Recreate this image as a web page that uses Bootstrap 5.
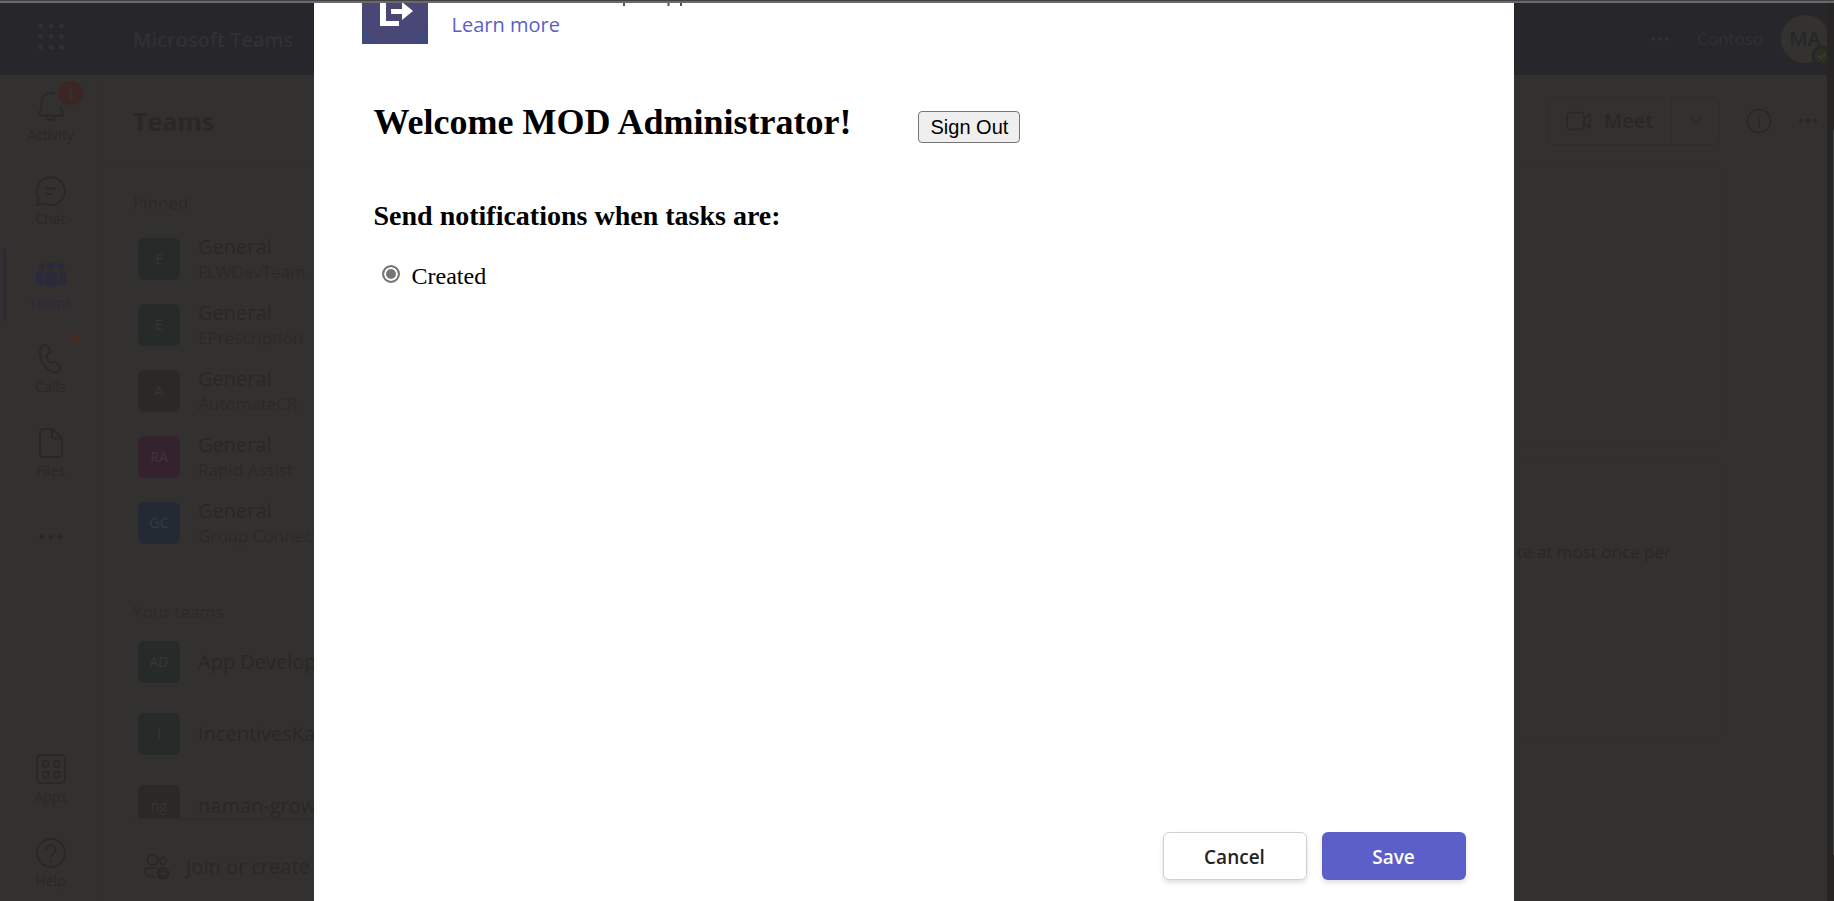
<!DOCTYPE html>
<html lang="en">
<head>
<meta charset="utf-8">
<meta name="viewport" content="width=device-width, initial-scale=1">
<title>Microsoft Teams</title>
<link href="https://cdn.jsdelivr.net/npm/bootstrap@5.3.0/dist/css/bootstrap.min.css" rel="stylesheet">
<style>
  :root { --page: #33312f; --ink: #292826; --line: #302e2d; --bar: #27262b; --violet: #2b293a; }
  body { font-family: "Open Sans", "Noto Sans", sans-serif; font-size: 20px; line-height: 28px; color: var(--ink); background: var(--page); }
  a { color: inherit; text-decoration: none; }
  button { color: inherit; }
  svg { display: block; fill: none; stroke: currentColor; flex: none; }
  svg.solid { fill: currentColor; stroke: none; }
  .app-shell { padding-right: 7px; }
  .window-edge { height: 3px; border-top: 1px solid #414042; background: #6b696b; margin-right: -7px; position: relative; z-index: 1; }
  .top-bar { height: 72px; background: var(--bar); color: #32312f; }
  .rail-cell { width: 102px; }
  .brand { font-size: 20px; font-weight: 600; padding: 2px 31px 0; }
  .tenant { font-size: 17px; padding: 0 18px 0 27px; }
  .rail { border-right: 1px solid var(--line); padding: 6px 0 2px; gap: 12px; font-size: 14px; }
  .rail a { height: 72px; padding-top: 11px; line-height: 26px; position: relative; }
  .rail a.active { color: var(--violet); }
  .rail a.active::before { content: ""; position: absolute; left: 3px; top: 0; width: 3px; height: 72px; background: var(--violet); }
  .rail .rail-more { padding-top: 0; }
  .count { position: absolute; top: 0; left: 58px; width: 25px; height: 24px; border-radius: 12px; background: #3b2624; color: #33312f; font-weight: 700; text-align: center; }
  .dot { position: absolute; top: 0; left: 69px; width: 11px; height: 11px; border-radius: 50%; background: #432c27; }
  .teams-panel { width: 300px; flex: none; border-right: 1px solid var(--line); }
  .teams-panel h1 { font-size: 25px; font-weight: 700; line-height: 36px; height: 92px; padding: 28px 31px 0; margin: 0; border-bottom: 1px solid var(--line); }
  .teams-panel h2 { font-size: 17px; font-weight: 400; line-height: 28px; margin: 0; padding-left: 31px; color: #2b2a28; }
  .head-pinned { padding-top: 24px; height: 61px; }
  .head-teams { padding-top: 42px; height: 70px; }
  .team-row { height: 66px; padding-left: 36px; gap: 18px; line-height: 25px; white-space: nowrap; }
  .team-row.single { height: 72px; }
  .team-row small { font-size: 17px; display: block; color: #2b2a28; }
  .tile { width: 42px; height: 42px; border-radius: 6px; background: #262b29; color: #343836; font-size: 14px; flex: none; }
  .tile.gray { background: #2b2927; color: #353432; }
  .tile.pink { background: #34222e; color: #46333f; }
  .tile.blue { background: #242a33; color: #343b40; }
  .join { height: 83px; border-top: 2px solid #302e2d; margin-left: 31px; padding: 12px 0 0 10px; gap: 16px; white-space: nowrap; }
  .meet-group { height: 48px; border: 1px solid #2f2d2c; border-radius: 6px; }
  .meet-group button { background: none; border: 0; }
  .meet-group button + button { border-left: 1px solid #2f2d2c; width: 48px; }
  .meet-btn { width: 123px; font-weight: 600; gap: 12px; }
  .channel-tools { height: 91px; gap: 26px; padding-right: 9px; }
  .post-box { border: 1px solid #312f2d; border-radius: 6px; margin: 0 105px 20px 0; font-size: 17px; text-align: right; }
  .avatar { width: 48px; height: 48px; border-radius: 50%; background: #33322f; color: #272629; font-weight: 600; margin-right: -2px; position: relative; }
  .presence { position: absolute; left: 30px; top: 30px; }
  .scroll-strip { position: fixed; right: 0; top: 3px; bottom: 0; width: 7px; background: #262524; overflow: hidden; }
  .thumb { position: absolute; left: 6px; top: 14%; bottom: 5%; width: 6px; background: #454545; border-radius: 3px 0 0 3px; }
  .overlay { position: fixed; top: 3px; bottom: 0; left: 0; right: 7px; }
  .dialog-box { width: 1200px; max-width: 100%; background: #fff; color: #252423; padding: 0 48px 21px; }
  .app-logo { width: 66px; height: 41px; }
  .learn { color: #5b5fc7; padding-left: 24px; }
  .learn svg { margin-left: 170px; color: #4b5566; }
  .tab-form { font-family: "Liberation Serif", serif; font-size: 24px; color: #000; padding: 48px 12px 0; }
  .tab-form h2 { font-size: 36px; font-weight: 700; line-height: 44px; margin: 0; }
  .tab-form h3 { font-size: 28px; font-weight: 700; line-height: 32px; margin: 0 0 30px; padding: 56px 0 0; }
  .sign-out { font-family: "Liberation Sans", sans-serif; font-size: 20px; line-height: 28px; width: 102px; height: 32px; padding: 0; color: #000; background: #efefef; border: 1px solid #767676; border-radius: 4px; margin: 11px 0 0 67px; }
  .radio-row input { appearance: none; width: 18px; height: 18px; border: 2px solid #767676; border-radius: 50%; background: #767676; box-shadow: inset 0 0 0 2px #fff; margin: 0 12px 5px 8px; }
  .dialog-btn { width: 144px; height: 48px; border-radius: 6px; font-size: 19px; font-weight: 600; padding: 2px 0 0; box-shadow: 0 3px 5px rgba(0,0,0,.12); }
  .dialog-actions { gap: 15px; }
  .cancel { background: #fff; border: 1px solid #d1d1d1; color: #252423; }
  .save { background: #5b5fc7; border: 0; color: #fff; }
</style>
</head>
<body>
<div class="app-shell vh-100 d-flex flex-column overflow-hidden">
  <div class="window-edge flex-shrink-0"></div>
  <header class="top-bar d-flex align-items-center flex-shrink-0">
    <div class="rail-cell d-flex justify-content-center pb-1">
      <svg class="solid" width="28" height="28" viewBox="0 0 28 28"><circle cx="3.500" cy="3" r="2.500"/><circle cx="14" cy="3" r="2.500"/><circle cx="24.500" cy="3" r="2.500"/><circle cx="3.500" cy="13.500" r="2.500"/><circle cx="14" cy="13.500" r="2.500"/><circle cx="24.500" cy="13.500" r="2.500"/><circle cx="3.500" cy="24" r="2.500"/><circle cx="14" cy="24" r="2.500"/><circle cx="24.500" cy="24" r="2.500"/></svg>
    </div>
    <div class="brand">Microsoft Teams</div>
    <div class="ms-auto d-flex align-items-center">
      <svg class="solid" width="20" height="6" viewBox="0 0 20 6"><circle cx="3" cy="3" r="2"/><circle cx="10" cy="3" r="2"/><circle cx="17" cy="3" r="2"/></svg>
      <span class="tenant">Contoso</span>
      <div class="avatar d-flex align-items-center justify-content-center">MA
        <svg class="presence" width="22" height="22" viewBox="0 0 22 22"><circle cx="11" cy="11" r="9" fill="#2c3020" stroke="#27262b" stroke-width="3"/><path d="M7.500 11l2.500 2.500 4.500-5" stroke="#3a3d30" stroke-width="1.500"/></svg>
      </div>
    </div>
  </header>
  <div class="d-flex flex-grow-1 overflow-hidden">
    <nav class="rail rail-cell d-flex flex-column flex-shrink-0 text-center">
      <a href="#" class="d-flex flex-column align-items-center">
        <svg width="30" height="30" viewBox="0 0 30 30" stroke-width="1.800"><path d="M19 2Q17 1 15 1C9.500 1 5.500 5 5.500 10v6L3 21.500Q2.500 23.500 4 23.500h22Q27.800 23.500 27 21.500l-2-5.500v-2M11 24a4 4 0 0 0 8 0"/></svg>
        Activity<span class="count">1</span></a>
      <a href="#" class="d-flex flex-column align-items-center">
        <svg width="30" height="30" viewBox="0 0 30 30" stroke-width="1.800"><path d="M1 29l1.500-7A14 14 0 1 1 8 27.500zM10 12.500h10M10 18h7"/></svg>
        Chat</a>
      <a href="#" class="active d-flex flex-column align-items-center">
        <svg class="solid" width="30" height="30" viewBox="0 0 30 30"><circle cx="5.500" cy="6.500" r="3.500"/><circle cx="15" cy="6" r="4"/><circle cx="24.500" cy="6.500" r="3.500"/><path d="M10.500 11h9q2 0 2 2v8.500a6.500 6 0 0 1-13 0V13q0-2 2-2zM2 11h5.500Q7 12 7 13v8q0 2.500 1 4C3 26 0 23 0 20v-7q0-2 2-2zM28 11h-5.500q.5 1 .5 2v8q0 2.500-1 4c5 1 8-2 8-5v-7q0-2-2-2z"/></svg>
        Teams</a>
      <a href="#" class="d-flex flex-column align-items-center">
        <svg width="30" height="30" viewBox="0 0 30 30" stroke-width="1.800"><path d="M7 1.500l2.500-.5q2-.3 3 2l1.200 3.500q.6 2-1 3.300L10.500 12q1 4 4 7l3.500-1q2-.5 3 1l2.500 3q1.500 2 0 3.800l-1.500 1.500q-2.500 2-6 .7Q4 22 4 7q0-4.500 3-5.500z"/></svg>
        Calls<span class="dot"></span></a>
      <a href="#" class="d-flex flex-column align-items-center">
        <svg width="30" height="30" viewBox="0 0 30 30" stroke-width="1.800"><path d="M7 1h9.500L26 10v16q0 3-3 3H7q-3 0-3-3V4q0-3 3-3zM16 1v7q0 2.500 2.500 2.500H26"/></svg>
        Files</a>
      <a href="#" class="rail-more d-flex align-items-center justify-content-center" aria-label="More apps">
        <svg class="solid" width="26" height="6" viewBox="0 0 26 6"><circle cx="3.500" cy="3" r="2.200"/><circle cx="13" cy="3" r="2.200"/><circle cx="22.500" cy="3" r="2.200"/></svg></a>
      <a href="#" class="mt-auto d-flex flex-column align-items-center">
        <svg width="30" height="30" viewBox="0 0 30 30" stroke-width="1.800"><rect x="1" y="1" width="28" height="28" rx="4"/><rect x="7" y="7" width="5.500" height="5.500" rx="1"/><rect x="18" y="7" width="5.500" height="5.500" rx="1"/><rect x="7" y="18" width="5.500" height="5.500" rx="1"/><rect x="18" y="18" width="5.500" height="5.500" rx="1"/></svg>
        Apps</a>
      <a href="#" class="d-flex flex-column align-items-center">
        <svg width="30" height="30" viewBox="0 0 30 30" stroke-width="1.800"><circle cx="15" cy="15" r="14"/><path d="M10.500 12a4.500 4.500 0 1 1 7 3.500Q15 17 15 19.500M15 21.500v2.500"/></svg>
        Help</a>
    </nav>
    <aside class="teams-panel d-flex flex-column">
      <h1>Teams</h1>
      <div class="flex-grow-1 overflow-hidden">
        <h2 class="head-pinned">Pinned</h2>
        <a href="#" class="team-row d-flex align-items-center"><span class="tile d-flex align-items-center justify-content-center">F</span><span>General<small>FLWDevTeam</small></span></a>
        <a href="#" class="team-row d-flex align-items-center"><span class="tile d-flex align-items-center justify-content-center">E</span><span>General<small>EPrescription</small></span></a>
        <a href="#" class="team-row d-flex align-items-center"><span class="tile gray d-flex align-items-center justify-content-center">A</span><span>General<small>AutomateCR</small></span></a>
        <a href="#" class="team-row d-flex align-items-center"><span class="tile pink d-flex align-items-center justify-content-center">RA</span><span>General<small>Rapid Assist</small></span></a>
        <a href="#" class="team-row d-flex align-items-center"><span class="tile blue d-flex align-items-center justify-content-center">GC</span><span>General<small>Group Connect</small></span></a>
        <h2 class="head-teams">Your teams</h2>
        <a href="#" class="team-row single d-flex align-items-center"><span class="tile d-flex align-items-center justify-content-center">AD</span>App Develop</a>
        <a href="#" class="team-row single d-flex align-items-center"><span class="tile d-flex align-items-center justify-content-center">I</span>IncentivesKa</a>
        <a href="#" class="team-row single d-flex align-items-center"><span class="tile gray d-flex align-items-center justify-content-center">ng</span>naman-grow</a>
      </div>
      <a href="#" class="join d-flex align-items-center flex-shrink-0">
        <svg width="27" height="28" viewBox="0 0 27 28" stroke-width="1.700"><circle cx="9.500" cy="7" r="5"/><circle cx="20" cy="8" r="3.300"/><path d="M12 15H4q-2.500 0-2.500 2.500Q2 24 12 24"/><circle cx="20" cy="20.500" r="6.500" fill="currentColor" stroke="none"/><path d="M20 17v7M16.500 20.500h7" stroke="#33312f" stroke-width="1.400"/></svg>
        Join or create</a>
    </aside>
    <main class="flex-grow-1 d-flex flex-column">
      <div class="channel-tools d-flex align-items-center justify-content-end flex-shrink-0">
        <div class="meet-group d-flex">
          <button class="meet-btn d-flex align-items-center justify-content-center p-0"><svg width="26" height="20" viewBox="0 0 26 20" stroke-width="1.600"><rect x="1" y="1.500" width="17" height="17" rx="4"/><path d="M18 7.500l6-4.500v14l-6-4.500"/></svg>Meet</button>
          <button class="d-flex align-items-center justify-content-center p-0" aria-label="Meet options"><svg width="12" height="8" viewBox="0 0 12 8" stroke-width="1.300"><path d="M1 1l5 5 5-5"/></svg></button>
        </div>
        <svg width="26" height="26" viewBox="0 0 26 26" stroke-width="1.500"><circle cx="13" cy="13" r="11.500"/><path d="M13 11v8M13 7v2"/></svg>
        <svg class="solid" width="20" height="6" viewBox="0 0 20 6"><circle cx="3" cy="3" r="2"/><circle cx="10" cy="3" r="2"/><circle cx="17" cy="3" r="2"/></svg>
      </div>
      <div class="post-box" style="height:276px"></div>
      <div class="post-box" style="height:277px;padding:75px 50px 0 0">te at most once per</div>
    </main>
  </div>
</div>
<div class="scroll-strip"><div class="thumb"></div></div>

<div class="overlay d-flex justify-content-center">
  <section class="dialog-box d-flex flex-column" role="dialog" aria-label="Tab settings">
    <div class="d-flex align-items-start">
      <svg class="app-logo solid" viewBox="0 0 66 41"><path fill="#40497e" d="M0 0h66v41H0z"/><path fill="#494775" d="M0 0h66v16Q64 30 51 41H15Q4 32 0 20z"/><path fill="#fff" d="M18 0h6v18h13v5H18zM29 6h11V-1l11 9-11 9v-6H29z"/></svg>
      <div class="learn">
        <svg width="64" height="8" viewBox="0 0 64 8" stroke-width="2"><path d="M2 0v3M46.500 0v3M59 0v3"/></svg>
        <a href="#">Learn more</a>
      </div>
    </div>
    <form class="tab-form flex-grow-1">
      <div class="d-flex align-items-start flex-wrap pt-2">
        <h2>Welcome MOD Administrator!</h2>
        <button type="button" class="sign-out">Sign Out</button>
      </div>
      <h3>Send notifications when tasks are:</h3>
      <div class="radio-row d-flex align-items-center">
        <input type="radio" id="created" name="event" checked>
        <label for="created">Created</label>
      </div>
    </form>
    <div class="dialog-actions d-flex justify-content-end">
      <button type="button" class="dialog-btn cancel">Cancel</button>
      <button type="button" class="dialog-btn save">Save</button>
    </div>
  </section>
</div>
<script src="https://cdn.jsdelivr.net/npm/bootstrap@5.3.0/dist/js/bootstrap.bundle.min.js"></script>
</body>
</html>
